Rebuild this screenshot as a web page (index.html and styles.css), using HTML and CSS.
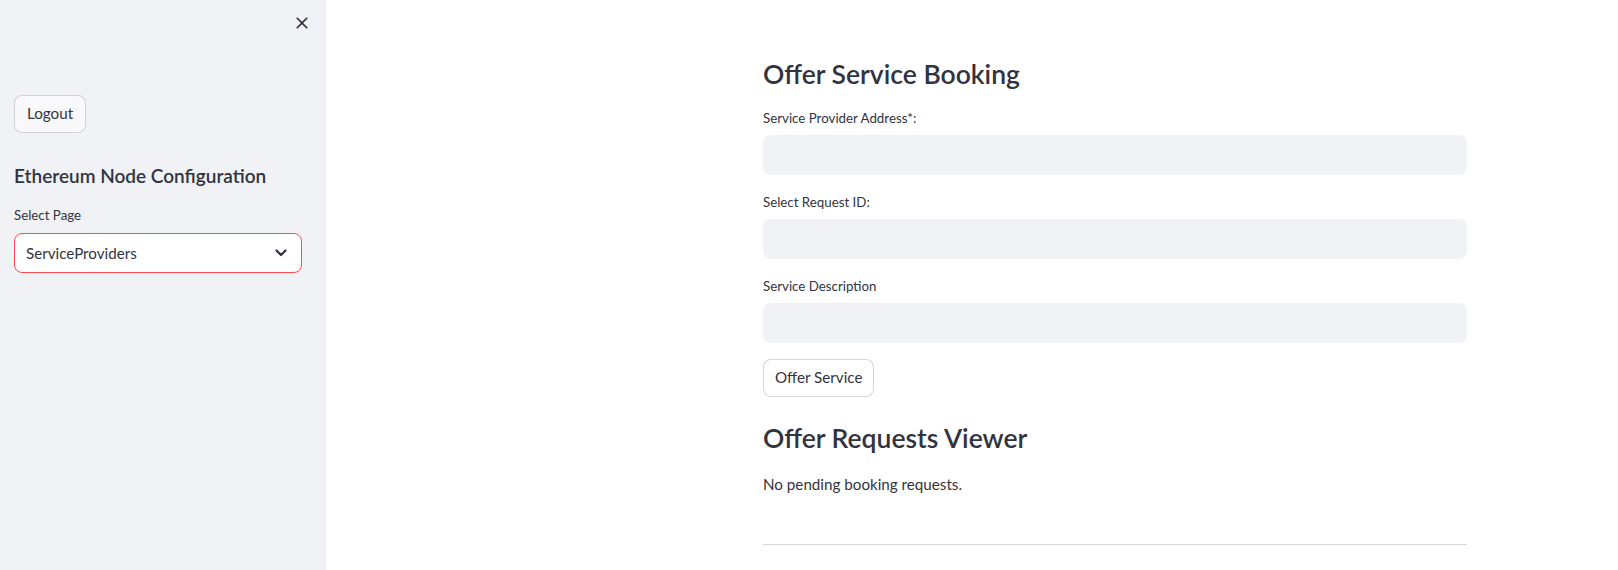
FILE: index.html
```html
<!DOCTYPE html>
<html lang="en">
<head>
<meta charset="utf-8">
<title>Service Providers</title>
<link rel="stylesheet" href="styles.css">
</head>
<body>
<div class="app">
  <aside class="sidebar">
    <div class="sidebar-header">
      <button class="close-btn" aria-label="Close sidebar">
        <svg width="20" height="20" viewBox="0 0 24 24"><path fill="#31333f" d="M19 6.41 17.59 5 12 10.59 6.41 5 5 6.41 10.59 12 5 17.59 6.41 19 12 13.41 17.59 19 19 17.59 13.41 12z"/></svg>
      </button>
    </div>
    <button class="btn btn-side">Logout</button>
    <h3 class="side-title">Ethereum Node Configuration</h3>
    <div class="field-label side-label">Select Page</div>
    <div class="select">
      <span class="select-value">ServiceProviders</span>
      <svg class="chevron" width="12" height="8" viewBox="0 0 12 8"><path d="M1.5 1.5 6 6l4.5-4.5" fill="none" stroke="#31333f" stroke-width="2.2" stroke-linecap="round" stroke-linejoin="round"/></svg>
    </div>
  </aside>
  <main class="main">
    <div class="content">
      <h2 class="title">Offer Service Booking</h2>
      <div class="field">
        <div class="field-label">Service Provider Address*:</div>
        <div class="input"></div>
      </div>
      <div class="field">
        <div class="field-label">Select Request ID:</div>
        <div class="input"></div>
      </div>
      <div class="field">
        <div class="field-label">Service Description</div>
        <div class="input"></div>
      </div>
      <button class="btn btn-main">Offer Service</button>
      <h2 class="title title-2">Offer Requests Viewer</h2>
      <p class="note">No pending booking requests.</p>
      <hr class="divider">
    </div>
  </main>
</div>
</body>
</html>
```
FILE: styles.css
```css
* { box-sizing: border-box; }
html, body { margin: 0; padding: 0; }
body {
  font-family: "Lato", "Noto Sans", sans-serif;
  color: #31333f;
  background: #ffffff;
}
.app {
  display: flex;
  width: 1618px;
  height: 570px;
  overflow: hidden;
}
.sidebar {
  width: 326px;
  flex: 0 0 326px;
  background: #f0f2f6;
  padding: 0 24px 0 14px;
  display: flex;
  flex-direction: column;
  align-items: flex-start;
}
.sidebar-header {
  height: 95px;
  align-self: stretch;
  display: flex;
  justify-content: flex-end;
  align-items: flex-start;
  padding-top: 13px;
  margin-right: -10px;
}
.close-btn {
  border: 0;
  background: transparent;
  padding: 0;
  width: 20px;
  height: 20px;
  display: block;
}
.close-btn svg { display: block; }
.btn {
  font-family: inherit;
  font-size: 15.2px;
  color: #31333f;
  height: 38px;
  padding: 0 12px;
  border: 1px solid rgba(49, 51, 63, 0.2);
  border-radius: 8px;
  background: #ffffff;
  line-height: 1;
}
.btn-side { background: #f9f9fb; }
.btn-main { padding: 0 11px; }
.side-title {
  margin: 31px 0 0;
  font-size: 19px;
  font-weight: 600;
  line-height: 24px;
}
.field-label {
  font-size: 13.3px;
  line-height: 21px;
}
.side-label { margin-top: 17px; }
.select {
  margin-top: 7px;
  align-self: stretch;
  height: 40px;
  background: #ffffff;
  border: 1px solid #ff4b4b;
  border-radius: 8px;
  display: flex;
  align-items: center;
  justify-content: space-between;
  padding: 0 14px 0 11px;
}
.select-value { font-size: 15.2px; }
.chevron { display: block; }
.main {
  flex: 1;
  padding-left: 437px;
}
.content {
  width: 704px;
  display: flex;
  flex-direction: column;
  align-items: flex-start;
}
.title {
  margin: 57px 0 0;
  font-size: 26.5px;
  font-weight: 600;
  line-height: 34px;
}
.title-2 { margin-top: 24px; }
.field {
  align-self: stretch;
  margin-top: 17px;
  display: flex;
  flex-direction: column;
}
.field .input {
  margin-top: 6px;
  height: 40px;
  background: #f0f2f6;
  border-radius: 8px;
}
.btn-main { margin-top: 16px; }
.note {
  margin: 17px 0 0;
  font-size: 15.2px;
  line-height: 24px;
}
.divider {
  align-self: stretch;
  margin: 48px 0 0;
  border: 0;
  border-top: 1px solid rgba(49, 51, 63, 0.2);
}
```
